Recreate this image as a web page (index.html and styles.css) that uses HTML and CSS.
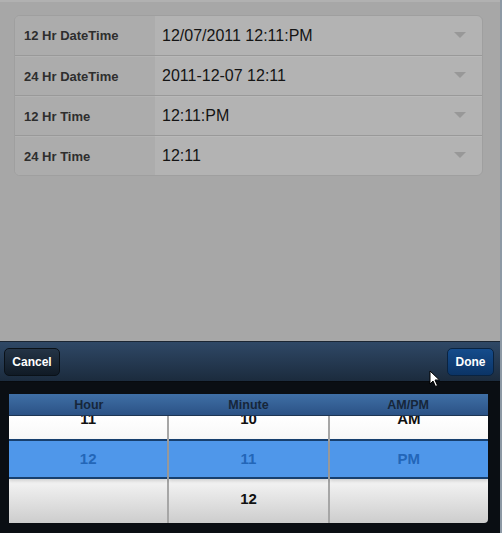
FILE: index.html
```html
<!DOCTYPE html>
<html>
<head>
<meta charset="utf-8">
<link rel="stylesheet" href="styles.css">
</head>
<body>
<div class="page">
  <div class="content">
    <div class="card">
      <div class="row">
        <div class="label">12 Hr DateTime</div>
        <div class="value"><span>12/07/2011 12:11:PM</span><i class="caret"></i></div>
      </div>
      <div class="row">
        <div class="label">24 Hr DateTime</div>
        <div class="value"><span>2011-12-07 12:11</span><i class="caret"></i></div>
      </div>
      <div class="row">
        <div class="label">12 Hr Time</div>
        <div class="value"><span>12:11:PM</span><i class="caret"></i></div>
      </div>
      <div class="row last">
        <div class="label">24 Hr Time</div>
        <div class="value"><span>12:11</span><i class="caret"></i></div>
      </div>
    </div>
  </div>
  <div class="picker">
    <div class="toolbar">
      <button class="btn cancel">Cancel</button>
      <button class="btn done">Done</button>
      <svg class="cursor" width="12" height="18" viewBox="0 0 12 18"><path d="M1 1 L1 14 L4 11 L6.5 16.5 L8.5 15.5 L6 10 L10.5 10 Z" fill="#fff" stroke="#000" stroke-width="1"/></svg>
    </div>
    <div class="wheel">
      <div class="heads">
        <div class="head">Hour</div>
        <div class="head">Minute</div>
        <div class="head">AM/PM</div>
      </div>
      <div class="cols">
        <div class="col">
          <div class="cell">11</div>
          <div class="cell sel">12</div>
          <div class="cell"></div>
        </div>
        <div class="col">
          <div class="cell">10</div>
          <div class="cell sel">11</div>
          <div class="cell">12</div>
        </div>
        <div class="col">
          <div class="cell">AM</div>
          <div class="cell sel">PM</div>
          <div class="cell"></div>
        </div>
      </div>
    </div>
  </div>
</div>
</body>
</html>
```
FILE: styles.css
```css
html, body {
  margin: 0;
  padding: 0;
}
body {
  width: 502px;
  height: 533px;
  overflow: hidden;
  background: #a7a7a7;
  font-family: "Liberation Sans", Arial, sans-serif;
}
.page {
  display: flex;
  flex-direction: column;
  height: 533px;
  border-right: 2px solid #8d99a5;
  box-sizing: border-box;
}
.content {
  height: 341px;
  padding: 13px 17px 0 14px;
  box-sizing: border-box;
  border-top: 2px solid #b1b1b1;
}
.card {
  border: 1px solid #9f9f9f;
  border-radius: 6px;
  overflow: hidden;
  background: #b3b3b3;
}
.row {
  display: flex;
  height: 40px;
  border-bottom: 1px solid #999;
  box-sizing: border-box;
}
.row.last {
  border-bottom: none;
  height: 39px;
}
.label {
  width: 140px;
  flex: none;
  background: #acacac;
  box-sizing: border-box;
  padding-left: 9px;
  display: flex;
  align-items: center;
  font-weight: bold;
  font-size: 13px;
  color: #2e2e2e;
  border-top: 1px solid #b2b2b2;
}
.row:first-child .label, .row:first-child .value { border-top: none; }
.value {
  flex: 1;
  display: flex;
  align-items: center;
  padding-left: 7px;
  padding-right: 16px;
  font-size: 16px;
  color: #141414;
  border-top: 1px solid #b9b9b9;
}
.value span { flex: 1; }
.caret {
  width: 0;
  height: 0;
  border-left: 6px solid transparent;
  border-right: 6px solid transparent;
  border-top: 6px solid #989898;
  margin-top: -2px;
}
.picker {
  flex: 1;
  background: #0a0e13;
  border-top: 1px solid #1b2633;
  display: flex;
  flex-direction: column;
}
.toolbar {
  height: 39px;
  background: linear-gradient(#2f4866, #1b2b3d);
  display: flex;
  align-items: center;
  justify-content: space-between;
  padding: 0 6px 0 4px;
  position: relative;
  border-bottom: 1px solid #070a0e;
}
.btn {
  height: 28px;
  border-radius: 5px;
  font-family: "Liberation Sans", Arial, sans-serif;
  font-weight: bold;
  font-size: 12px;
  color: #fff;
  padding: 0;
  cursor: default;
}
.cancel {
  width: 56px;
  background: linear-gradient(#243446, #101a25);
  border: 1px solid #0a1118;
}
.done {
  width: 47px;
  background: linear-gradient(#154c8c, #0b3466);
  border: 1px solid #0a2340;
}
.cursor {
  position: absolute;
  left: 429px;
  top: 28px;
}
.wheel {
  margin: 12px 12px 0 9px;
  height: 129px;
  display: flex;
  flex-direction: column;
  border-bottom-right-radius: 4px;
  overflow: hidden;
}
.heads {
  display: flex;
  height: 21px;
  background: linear-gradient(#3f6fa6, #2b5285);
  border-bottom: 1px solid #1d3553;
  flex: none;
  position: relative;
  z-index: 2;
}
.head {
  flex: 1;
  text-align: center;
  font-weight: bold;
  font-size: 12.5px;
  line-height: 23px;
  color: #16263a;
}
.cols {
  flex: 1;
  display: flex;
  overflow: hidden;
  background: linear-gradient(#ffffff 0%, #f4f4f4 30%, #f4f4f4 60%, #cdcdcd 100%);
}
.col {
  flex: 1;
  border-right: 2px solid #a6a6a6;
  margin-top: -17px;
}
.col:last-child { border-right: none; }
.cell {
  height: 40px;
  line-height: 40px;
  text-align: center;
  font-weight: bold;
  font-size: 15px;
  color: #111;
}
.cell.sel {
  background: #4f97ea;
  color: #2366b8;
  border-top: 2px solid #173f6e;
  border-bottom: 2px solid #173f6e;
  height: 36px;
  line-height: 36px;
  box-shadow: 0 2px 3px rgba(0,0,0,0.15);
}
```
